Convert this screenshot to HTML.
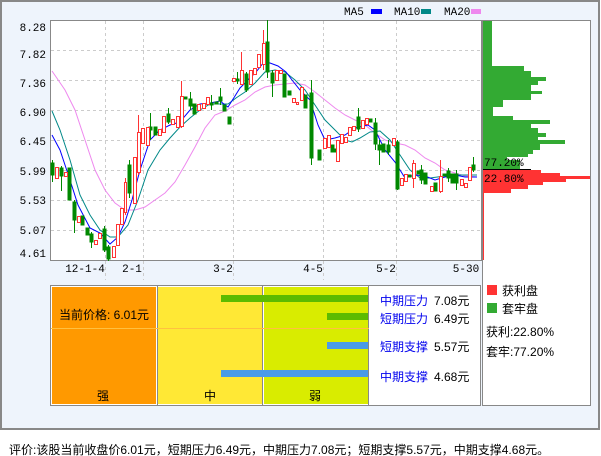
<!DOCTYPE html>
<html><head><meta charset="utf-8"><style>
body{margin:0;background:#fff;width:601px;height:456px;overflow:hidden}
svg{display:block}
text{font-family:"Liberation Mono","DejaVu Sans Mono","WenQuanYi Zen Hei",monospace;font-size:11px}
.c{font-family:"Liberation Sans","WenQuanYi Zen Hei","Noto Sans CJK SC",sans-serif;font-size:12px}
</style></head><body>
<svg width="601" height="456" viewBox="0 0 601 456" xmlns="http://www.w3.org/2000/svg">
<rect x="1" y="1" width="598" height="428" fill="#eef4fc" stroke="#888" stroke-width="2"/>
<text x="344" y="15">MA5</text><rect x="371" y="9" width="11" height="5" fill="#0000ff"/>
<text x="394" y="15">MA10</text><rect x="421" y="9" width="10" height="5" fill="#008888"/>
<text x="444" y="15">MA20</text><rect x="471" y="9" width="10" height="5" fill="#ee88ee"/>
<rect x="50.5" y="20.5" width="431" height="240" fill="#fff" stroke="#888"/>
<g stroke="#ccc" stroke-dasharray="3,3">
<line x1="51" y1="50.5" x2="481" y2="50.5"/><line x1="51" y1="80.5" x2="481" y2="80.5"/><line x1="51" y1="110.5" x2="481" y2="110.5"/><line x1="51" y1="140.5" x2="481" y2="140.5"/><line x1="51" y1="170.5" x2="481" y2="170.5"/><line x1="51" y1="200.5" x2="481" y2="200.5"/><line x1="51" y1="230.5" x2="481" y2="230.5"/>
<line x1="105.5" y1="21" x2="105.5" y2="280"/><line x1="143.5" y1="21" x2="143.5" y2="280"/><line x1="233.5" y1="21" x2="233.5" y2="280"/><line x1="323.5" y1="21" x2="323.5" y2="280"/><line x1="396.5" y1="21" x2="396.5" y2="280"/>
</g>
<g text-anchor="end" font-size="11">
<text x="46" y="31">8.28</text><text x="46" y="58">7.82</text><text x="46" y="87">7.36</text><text x="46" y="116">6.90</text><text x="46" y="145">6.45</text><text x="46" y="175">5.99</text><text x="46" y="204">5.53</text><text x="46" y="234">5.07</text><text x="46" y="257">4.61</text>
</g>
<g text-anchor="middle">
<text x="85" y="272">12-1-4</text><text x="132" y="272">2-1</text><text x="223" y="272">3-2</text><text x="313" y="272">4-5</text><text x="386" y="272">5-2</text><text x="466" y="272">5-30</text>
</g>
<polyline fill="none" stroke="#ee88ee" stroke-width="1" points="52,71 65,90 75,110 85,140 95,170 105,190 115,203 125,210 135,210 145,207 155,200 165,193 175,182 185,165 195,147 205,128 215,115 225,111 235,105 245,100 255,92 265,87 275,85 285,84 295,83 305,85 315,92 325,100 335,108 345,115 355,120 365,125 375,133 385,140 395,143 405,145 415,150 425,158 435,163 445,170 455,173 465,176 477,177"/>
<polyline fill="none" stroke="#008888" stroke-width="1" points="52,111 60,130 70,160 80,195 90,215 100,230 110,237 118,237 128,225 138,200 148,170 160,150 170,138 180,127 190,118 200,110 210,104 220,104 228,104 236,98 245,92 255,83 265,72 275,70 285,72 295,80 305,90 315,105 325,120 335,130 345,140 352,142 360,138 370,132 380,131 390,140 400,155 410,170 420,178 430,178 445,176 460,175 477,175"/>
<polyline fill="none" stroke="#0000ff" stroke-width="1" points="52,135 60,150 70,180 78,205 90,228 100,233 110,244 118,237 125,222 132,200 140,170 150,140 160,130 170,125 180,122 190,110 200,104 210,103 220,101 228,107 235,96 240,88 248,80 256,72 264,62 270,63 278,66 286,72 292,80 300,90 310,100 318,125 325,140 335,138 345,135 355,128 368,125 375,130 385,150 395,162 400,170 405,178 415,175 425,176 435,180 445,177 455,175 465,177 477,177"/>
<g stroke-width="1">
<g stroke="#008800" fill="#008800">
<line x1="52.5" y1="160" x2="52.5" y2="182"/><rect x="51" y="163" width="3" height="12"/>
<line x1="61.5" y1="166" x2="61.5" y2="191"/><rect x="60" y="168" width="3" height="8"/>
<rect x="68" y="168" width="3" height="32"/>
<line x1="74.5" y1="200" x2="74.5" y2="233"/><rect x="73" y="202" width="3" height="18"/>
<rect x="81" y="216" width="3" height="9"/>
<rect x="86" y="228" width="3" height="7"/>
<line x1="91.5" y1="232" x2="91.5" y2="248"/><rect x="90" y="234" width="3" height="8"/>
<line x1="104.5" y1="226" x2="104.5" y2="252"/><rect x="103" y="229" width="3" height="21"/>
<line x1="108.5" y1="245" x2="108.5" y2="261"/><rect x="107" y="247" width="3" height="12"/>
<line x1="129.5" y1="160" x2="129.5" y2="198"/><rect x="128" y="165" width="3" height="28"/>
<line x1="150.5" y1="113" x2="150.5" y2="140"/><rect x="149" y="127" width="3" height="3"/>
<rect x="154" y="127" width="3" height="8"/>
<line x1="168.5" y1="108" x2="168.5" y2="124"/><rect x="167" y="114" width="3" height="8"/>
<rect x="184" y="97" width="3" height="2"/>
<line x1="190.5" y1="92" x2="190.5" y2="110"/><rect x="189" y="99" width="3" height="7"/>
<rect x="193" y="104" width="3" height="10"/>
<line x1="211.5" y1="95" x2="211.5" y2="110"/><rect x="210" y="103" width="3" height="2"/>
<rect x="215" y="102" width="3" height="2"/>
<line x1="220.5" y1="88" x2="220.5" y2="105"/><rect x="219" y="97" width="3" height="4"/>
<rect x="223" y="105" width="3" height="6"/>
<rect x="228" y="117" width="3" height="7"/>
<line x1="237.5" y1="72" x2="237.5" y2="84"/><rect x="236" y="79" width="3" height="2"/>
<line x1="246.5" y1="72" x2="246.5" y2="92"/><rect x="245" y="74" width="3" height="16"/>
<line x1="267.5" y1="20" x2="267.5" y2="78"/><rect x="266" y="42" width="3" height="30"/>
<line x1="272.5" y1="70" x2="272.5" y2="97"/><rect x="271" y="73" width="3" height="10"/>
<rect x="283" y="74" width="3" height="23"/>
<rect x="288" y="91" width="3" height="4"/>
<rect x="304" y="95" width="3" height="13"/>
<line x1="311.5" y1="80" x2="311.5" y2="165"/><rect x="310" y="93" width="3" height="65"/>
<rect x="318" y="150" width="3" height="10"/>
<rect x="331" y="145" width="3" height="7"/>
<rect x="334" y="149" width="3" height="3"/>
<rect x="369" y="119" width="3" height="3"/>
<line x1="358.5" y1="108" x2="358.5" y2="132"/><rect x="357" y="117" width="3" height="12"/>
<line x1="375.5" y1="118" x2="375.5" y2="150"/><rect x="374" y="123" width="3" height="21"/>
<line x1="379.5" y1="140" x2="379.5" y2="165"/><rect x="378" y="145" width="3" height="5"/>
<rect x="382" y="144" width="3" height="8"/>
<line x1="388.5" y1="140" x2="388.5" y2="155"/><rect x="387" y="145" width="3" height="7"/>
<line x1="397.5" y1="140" x2="397.5" y2="190"/><rect x="396" y="142" width="3" height="47"/>
<rect x="408" y="175" width="3" height="2"/>
<rect x="417" y="171" width="3" height="3"/>
<line x1="421.5" y1="165" x2="421.5" y2="184"/><rect x="420" y="170" width="3" height="10"/>
<rect x="424" y="173" width="3" height="11"/>
<rect x="434" y="183" width="3" height="8"/>
<rect x="443" y="174" width="3" height="2"/>
<line x1="448.5" y1="168" x2="448.5" y2="182"/><rect x="447" y="171" width="3" height="7"/>
<rect x="451" y="174" width="3" height="9"/>
<line x1="456.5" y1="170" x2="456.5" y2="190"/><rect x="455" y="174" width="3" height="9"/>
<line x1="473.5" y1="157" x2="473.5" y2="172"/><rect x="472" y="165" width="3" height="5"/>
</g>
<g stroke="#ff3333" fill="#fff">
<rect x="55.5" y="167.5" width="3" height="11"/>
<rect x="64.5" y="172.5" width="3" height="4"/>
<rect x="77.5" y="216.5" width="3" height="6"/>
<rect x="94.5" y="240.5" width="3" height="4"/>
<rect x="98.5" y="233.5" width="3" height="5"/>
<rect x="112.5" y="246.5" width="3" height="11"/>
<rect x="116.5" y="224.5" width="3" height="21"/>
<rect x="120.5" y="208.5" width="3" height="16"/>
<line x1="125.5" y1="178" x2="125.5" y2="215"/><rect x="124.5" y="182.5" width="2" height="30"/>
<rect x="133.5" y="157.5" width="3" height="46"/>
<line x1="138.5" y1="115" x2="138.5" y2="175"/><rect x="137.5" y="132.5" width="3" height="40"/>
<rect x="141.5" y="128.5" width="3" height="15"/>
<rect x="146.5" y="127.5" width="3" height="18"/>
<rect x="158.5" y="129.5" width="3" height="6"/>
<rect x="162.5" y="116.5" width="3" height="16"/>
<rect x="171.5" y="119.5" width="3" height="5"/>
<rect x="176.5" y="116.5" width="3" height="11"/>
<line x1="181.5" y1="81" x2="181.5" y2="128"/><rect x="180.5" y="96.5" width="3" height="30"/>
<rect x="197.5" y="104.5" width="3" height="6"/>
<rect x="202.5" y="103.5" width="3" height="5"/>
<rect x="206.5" y="97.5" width="3" height="7"/>
<rect x="232.5" y="78.5" width="3" height="3"/>
<line x1="241.5" y1="52" x2="241.5" y2="85"/><rect x="240.5" y="70.5" width="3" height="14"/>
<rect x="249.5" y="70.5" width="3" height="14"/>
<rect x="253.5" y="68.5" width="3" height="6"/>
<rect x="257.5" y="54.5" width="3" height="13"/>
<line x1="263.5" y1="30" x2="263.5" y2="70"/><rect x="262.5" y="43.5" width="3" height="21"/>
<rect x="275.5" y="70.5" width="3" height="10"/>
<rect x="279.5" y="70.5" width="3" height="3"/>
<rect x="292.5" y="98.5" width="3" height="4"/>
<rect x="296.5" y="102.5" width="2" height="2"/>
<rect x="300.5" y="87.5" width="3" height="13"/>
<rect x="323.5" y="138.5" width="3" height="10"/>
<rect x="327.5" y="135.5" width="3" height="12"/>
<rect x="336.5" y="140.5" width="3" height="21"/>
<rect x="340.5" y="134.5" width="3" height="9"/>
<rect x="344.5" y="137.5" width="3" height="5"/>
<rect x="348.5" y="127.5" width="3" height="8"/>
<rect x="352.5" y="126.5" width="3" height="4"/>
<rect x="361.5" y="120.5" width="3" height="8"/>
<rect x="365.5" y="118.5" width="3" height="6"/>
<rect x="392.5" y="138.5" width="3" height="7"/>
<rect x="400.5" y="178.5" width="3" height="7"/>
<rect x="404.5" y="174.5" width="3" height="7"/>
<line x1="413.5" y1="160" x2="413.5" y2="188"/><rect x="412.5" y="163.5" width="3" height="15"/>
<rect x="430.5" y="186.5" width="3" height="5"/>
<line x1="440.5" y1="160" x2="440.5" y2="193"/><rect x="439.5" y="176.5" width="3" height="15"/>
<rect x="460.5" y="179.5" width="3" height="6"/>
<rect x="464.5" y="183.5" width="3" height="4"/>
<rect x="468.5" y="167.5" width="3" height="13"/>
</g>
</g>
<rect x="482.5" y="20.5" width="108" height="385" fill="#fff" stroke="#888"/>
<g fill="#33aa33">
<rect x="483" y="21" width="9" height="45"/>
<rect x="483" y="66" width="41" height="5"/><rect x="483" y="71" width="48" height="6"/><rect x="483" y="77" width="63" height="4"/><rect x="483" y="81" width="55" height="4"/><rect x="483" y="85" width="48" height="6"/><rect x="483" y="91" width="59" height="3"/><rect x="483" y="94" width="48" height="6"/><rect x="483" y="100" width="20" height="7"/><rect x="483" y="107" width="10" height="9"/><rect x="483" y="116" width="30" height="4"/><rect x="483" y="120" width="67" height="4"/><rect x="483" y="124" width="48" height="4"/><rect x="483" y="128" width="55" height="5"/><rect x="483" y="133" width="63" height="4"/><rect x="483" y="137" width="55" height="3"/><rect x="483" y="140" width="82" height="4"/><rect x="483" y="144" width="57" height="6"/><rect x="483" y="150" width="50" height="4"/><rect x="483" y="154" width="45" height="3"/><rect x="483" y="157" width="24" height="3"/><rect x="483" y="160" width="37" height="9"/>
</g>
<g fill="#ff3333">
<rect x="483" y="170" width="58" height="3"/><rect x="483" y="173" width="77" height="3"/><rect x="483" y="176" width="107" height="3"/><rect x="483" y="179" width="83" height="3"/><rect x="483" y="182" width="60" height="3"/><rect x="483" y="185" width="45" height="4"/><rect x="483" y="189" width="28" height="4"/>
<rect x="483" y="193" width="1" height="67"/>
</g>
<line x1="483" y1="169.5" x2="531" y2="169.5" stroke="#000"/>
<text x="484" y="166">77.20%</text><text x="484" y="182">22.80%</text>
<rect x="50.5" y="285.5" width="430" height="120" fill="#fff" stroke="#888"/>
<rect x="52" y="287" width="104" height="117" fill="#ff9900"/>
<rect x="158" y="287" width="104" height="117" fill="#ffe835"/>
<rect x="264" y="287" width="104" height="117" fill="#d9ec00"/>
<line x1="156.5" y1="286" x2="156.5" y2="405" stroke="#fff"/><line x1="157.5" y1="286" x2="157.5" y2="405" stroke="#888"/>
<line x1="262.5" y1="286" x2="262.5" y2="405" stroke="#888"/><line x1="263.5" y1="286" x2="263.5" y2="405" stroke="#fff"/>
<line x1="368.5" y1="286" x2="368.5" y2="405" stroke="#888"/>
<line x1="51" y1="328.5" x2="369" y2="328.5" stroke="#ffc040"/>
<rect x="221" y="295" width="147" height="7" fill="#5cbb00"/>
<rect x="327" y="313" width="41" height="7" fill="#5cbb00"/>
<rect x="327" y="342" width="41" height="7" fill="#4a9be8"/>
<rect x="221" y="370" width="147" height="7" fill="#4a9be8"/>
<text class="c" x="59" y="319">当前价格: 6.01元</text>
<text class="c" x="97" y="400">强</text><text class="c" x="204" y="400">中</text><text class="c" x="309" y="400">弱</text>
<text class="c" x="380" y="305" fill="#0000ee">中期压力</text><text class="c" x="434" y="305">7.08元</text>
<text class="c" x="380" y="323" fill="#0000ee">短期压力</text><text class="c" x="434" y="323">6.49元</text>
<text class="c" x="380" y="351" fill="#0000ee">短期支撑</text><text class="c" x="434" y="351">5.57元</text>
<text class="c" x="380" y="381" fill="#0000ee">中期支撑</text><text class="c" x="434" y="381">4.68元</text>
<rect x="487" y="285" width="10" height="10" fill="#ff3333"/><text class="c" x="502" y="295">获利盘</text>
<rect x="487" y="303" width="10" height="10" fill="#33aa33"/><text class="c" x="502" y="313">套牢盘</text>
<text class="c" x="486" y="336">获利:22.80%</text>
<text class="c" x="486" y="356">套牢:77.20%</text>
<text class="c" x="9" y="454">评价:该股当前收盘价6.01元，短期压力6.49元，中期压力7.08元；短期支撑5.57元，中期支撑4.68元。</text>
</svg>
</body></html>
